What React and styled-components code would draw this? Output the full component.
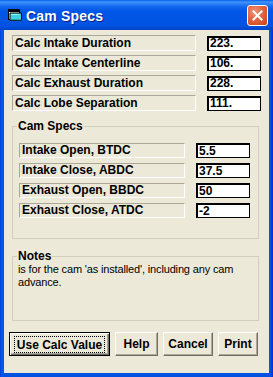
import React from 'react';
import styled, { createGlobalStyle } from 'styled-components';

const Global = createGlobalStyle`
  html, body { margin: 0; padding: 0; background: #fff; }
  body { font-family: "Liberation Sans", Arial, sans-serif; }
  * { box-sizing: border-box; }
`;

const Window = styled.div`
  width: 273px;
  height: 377px;
  display: flex;
  flex-direction: column;
  background: linear-gradient(to right, #0831D9 0, #0855DD 1px, #0058EE 2px, #0058EE 3px, #0052E0 4px, #0052E0 269px, #0058EE 270px, #0050DA 271px, #0831D9 272px);
`;

const TitleBar = styled.div`
  height: 30px;
  flex: none;
  display: flex;
  align-items: center;
  padding: 0 5px 0 7px;
  gap: 3px;
  background: linear-gradient(to bottom, #0A5FE6 0px, #3D95FF 2px, #2C7FF6 4px, #1265EC 7px, #0058E8 11px, #0055E4 18px, #0054E2 24px, #0050DA 27px, #0046CC 29px);
`;

const TitleText = styled.span`
  flex: 1;
  color: #fff;
  font: bold 14px "Liberation Sans", Arial, sans-serif;
  text-shadow: 1px 1px 0 #0A1E8A;
  letter-spacing: 0.2px;
  padding-top: 1px;
`;

const CloseButton = styled.div`
  width: 21px;
  height: 21px;
  border: 1px solid #fff;
  border-radius: 3px;
  background: radial-gradient(circle at 35% 30%, #F09477 0%, #E2643F 45%, #C8421C 100%);
  display: flex;
  align-items: center;
  justify-content: center;
`;

const Client = styled.div`
  flex: 1;
  margin: 0 4px 4px 4px;
  background: #ECE9D8;
  display: flex;
  flex-direction: column;
  padding: 6px 8px 0 8px;
`;

const Grid = styled.div`
  display: grid;
  grid-template-columns: ${p => p.$label}px 54px;
  column-gap: 11px;
  grid-auto-rows: ${p => p.$row}px;
  row-gap: ${p => p.$gap}px;
  align-items: center;
  margin-top: ${p => p.$mt || 0}px;
`;

const StaticLabel = styled.div`
  height: ${p => p.$h}px;
  border: 1px solid;
  border-color: #ACA899 #FFFFFF #FFFFFF #ACA899;
  font: bold 12px "Liberation Sans", Arial, sans-serif;
  line-height: ${p => p.$h - 2}px;
  padding-left: 2px;
  color: #000;
  white-space: nowrap;
  overflow: hidden;
`;

const ValueBox = styled.input`
  width: 54px;
  height: 15px;
  margin: 0;
  border: 1px solid #000;
  box-shadow: inset 1px 1px 0 #000;
  background: #fff;
  font: bold 12px "Liberation Sans", Arial, sans-serif;
  color: #000;
  padding: 0 0 0 2px;
  outline: none;
`;

const Group = styled.fieldset`
  margin: ${p => p.$top}px 2px 0 0;
  padding: ${p => p.$pt}px 9px ${p => p.$pb}px ${p => p.$pl}px;
  border: 1px solid #D0D0BF;
  min-width: 0;
`;

const Legend = styled.legend`
  font: bold 12px "Liberation Sans", Arial, sans-serif;
  line-height: 14px;
  padding: 0 1px;
  margin-left: ${p => p.$ml}px;
  color: #000;
`;

const NoteText = styled.div`
  font: 11px "Liberation Sans", Arial, sans-serif;
  letter-spacing: -0.15px;
  line-height: 13px;
  color: #000;
`;

const ButtonRow = styled.div`
  display: flex;
  gap: 5px;
  margin: 11px 0 0 -3px;
`;

const Button = styled.button`
  width: ${p => p.$w}px;
  height: 24px;
  margin: 0;
  padding: 0;
  background: #ECE9D8;
  border: 1px solid;
  border-color: ${p => (p.$default ? '#000' : '#fff #716F64 #716F64 #fff')};
  box-shadow: ${p =>
    p.$default
      ? 'inset 1px 1px 0 #fff, inset -1px -1px 0 #716F64, inset -2px -2px 0 #ACA899'
      : 'inset -1px -1px 0 #ACA899'};
  font: bold 12px "Liberation Sans", Arial, sans-serif;
  color: #000;
  display: flex;
  align-items: center;
  justify-content: center;
`;

const Focus = styled.span`
  border: 1px dotted #000;
  padding: 1px 2px 0 2px;
  line-height: 14px;
`;

const AppIcon = () => (
  <svg width="16" height="14" viewBox="0 0 16 14">
    <rect x="1.5" y="1.5" width="11" height="10" fill="#fff" stroke="#000" />
    <rect x="2" y="2" width="10" height="2" fill="#000" />
    <path d="M3 5 H14.5 V12.5 H3 Z" fill="#3FD5E0" stroke="#000" />
    <path d="M4 6 H12 V7 H4 Z" fill="#9EF1F5" />
    <path d="M4 12 L15 12" stroke="#1A6B70" />
  </svg>
);

const CloseX = () => (
  <svg width="11" height="11" viewBox="0 0 11 11">
    <path d="M1.5 1.5 L9.5 9.5 M9.5 1.5 L1.5 9.5" stroke="#fff" strokeWidth="2" strokeLinecap="square" />
  </svg>
);

const calcRows = [
  ['Calc Intake Duration', '223.'],
  ['Calc Intake Centerline', '106.'],
  ['Calc Exhaust Duration', '228.'],
  ['Calc Lobe Separation', '111.'],
];

const specRows = [
  ['Intake Open, BTDC', '5.5'],
  ['Intake Close, ABDC', '37.5'],
  ['Exhaust Open, BBDC', '50'],
  ['Exhaust Close, ATDC', '-2'],
];

export default function App() {
  return (
    <>
      <Global />
      <Window>
        <TitleBar>
          <AppIcon />
          <TitleText>Cam Specs</TitleText>
          <CloseButton>
            <CloseX />
          </CloseButton>
        </TitleBar>
        <Client>
          <Grid $label={184} $row={16} $gap={4} $mt={-1}>
            {calcRows.map(([l, v]) => (
              <React.Fragment key={l}>
                <StaticLabel $h={16}>{l}</StaticLabel>
                <ValueBox readOnly defaultValue={v} />
              </React.Fragment>
            ))}
          </Grid>
          <Group $top={8} $pt={10} $pb={20} $pl={6}>
            <Legend $ml={-2}>Cam Specs</Legend>
            <Grid $label={166} $row={15} $gap={5}>
              {specRows.map(([l, v]) => (
                <React.Fragment key={l}>
                  <StaticLabel $h={15}>{l}</StaticLabel>
                  <ValueBox readOnly defaultValue={v} />
                </React.Fragment>
              ))}
            </Grid>
          </Group>
          <Group $top={10} $pt={0} $pb={31} $pl={5}>
            <Legend $ml={-1}>Notes</Legend>
            <NoteText>is for the cam 'as installed', including any cam advance.</NoteText>
          </Group>
          <ButtonRow>
            <Button $w={101} $default>
              <Focus>Use Calc Value</Focus>
            </Button>
            <Button $w={43}>Help</Button>
            <Button $w={50}>Cancel</Button>
            <Button $w={40}>Print</Button>
          </ButtonRow>
        </Client>
      </Window>
    </>
  );
}
